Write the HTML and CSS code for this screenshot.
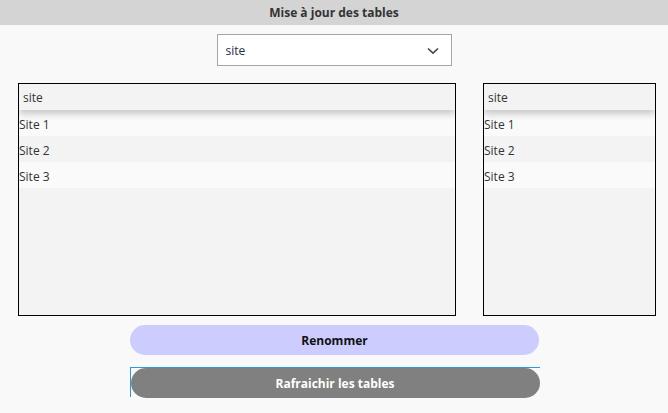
FILE: index.html
```html
<!DOCTYPE html>
<html lang="fr">
<head>
<meta charset="utf-8">
<title>Mise à jour des tables</title>
<link rel="stylesheet" href="styles.css">
</head>
<body>
<header class="topbar">Mise à jour des tables</header>
<div class="select-row">
  <div class="select">
    <span class="select-value">site</span>
    <svg class="chevron" width="12" height="8" viewBox="0 0 12 8"><path d="M1 1.5 L6 6.2 L11 1.5" fill="none" stroke="#444" stroke-width="1.6"/></svg>
  </div>
</div>
<div class="panels">
  <div class="panel panel-main">
    <div class="panel-head">site</div>
    <div class="row row-light">Site 1</div>
    <div class="row row-dark">Site 2</div>
    <div class="row row-light">Site 3</div>
  </div>
  <div class="panel panel-side">
    <div class="panel-head">site</div>
    <div class="row row-light">Site 1</div>
    <div class="row row-dark">Site 2</div>
    <div class="row row-light">Site 3</div>
  </div>
</div>
<div class="actions">
  <button class="btn btn-rename">Renommer</button>
  <div class="focus-wrap">
    <button class="btn btn-refresh">Rafraichir les tables</button>
  </div>
</div>
</body>
</html>
```
FILE: styles.css
```css
* { box-sizing: border-box; }
html, body { margin: 0; padding: 0; }
body {
  background: #f9f9f9;
  font-family: "Open Sans", "Noto Sans", sans-serif;
  color: #333;
  width: 668px;
  height: 413px;
  overflow: hidden;
}
.topbar {
  height: 25px;
  background: #d4d4d4;
  text-align: center;
  font-weight: 700;
  font-size: 12px;
  line-height: 25px;
  color: #333;
}
.select-row {
  display: flex;
  justify-content: center;
  padding-top: 9px;
}
.select {
  width: 235px;
  height: 32px;
  background: #fff;
  border: 1px solid #a6a6a6;
  display: flex;
  align-items: center;
  justify-content: space-between;
  padding: 1px 12px 0 8px;
  font-size: 12px;
  color: #2b2b45;
}
.select-value { line-height: 30px; }
.chevron { display: block; }
.panels {
  display: flex;
  gap: 27px;
  padding: 17px 12px 0 18px;
}
.panel {
  height: 233px;
  border: 1px solid #000;
  background: #f3f3f3;
  overflow: hidden;
}
.panel-main { width: 438px; }
.panel-side { width: 173px; }
.panel-head {
  height: 26px;
  line-height: 26px;
  padding: 1px 0 0 4px;
  font-size: 12px;
  color: #333;
  background: #f3f3f3;
  box-shadow: 0 4px 7px rgba(0,0,0,0.2);
  position: relative;
}
.row {
  height: 26px;
  line-height: 25px;
  padding-top: 2px;
  font-size: 12px;
  color: #333;
}
.row-light { background: #fafafa; }
.row-dark { background: #f3f3f3; }
.actions {
  display: flex;
  flex-direction: column;
  align-items: center;
  padding-top: 9px;
  padding-left: 1px;
}
.btn {
  display: block;
  width: 409px;
  height: 30px;
  border: 0;
  border-radius: 15px;
  font-family: "Open Sans", "Noto Sans", sans-serif;
  font-weight: 700;
  font-size: 12px;
  padding: 0;
}
.btn-rename {
  background: #ccccff;
  color: #111;
}
.focus-wrap {
  margin-top: 12px;
  border-top: 1px solid #2a9ad8;
  border-left: 1px solid #2a9ad8;
  height: 30px;
  width: 410px;
}
.btn-refresh {
  background: #808080;
  color: #fff;
}
```
